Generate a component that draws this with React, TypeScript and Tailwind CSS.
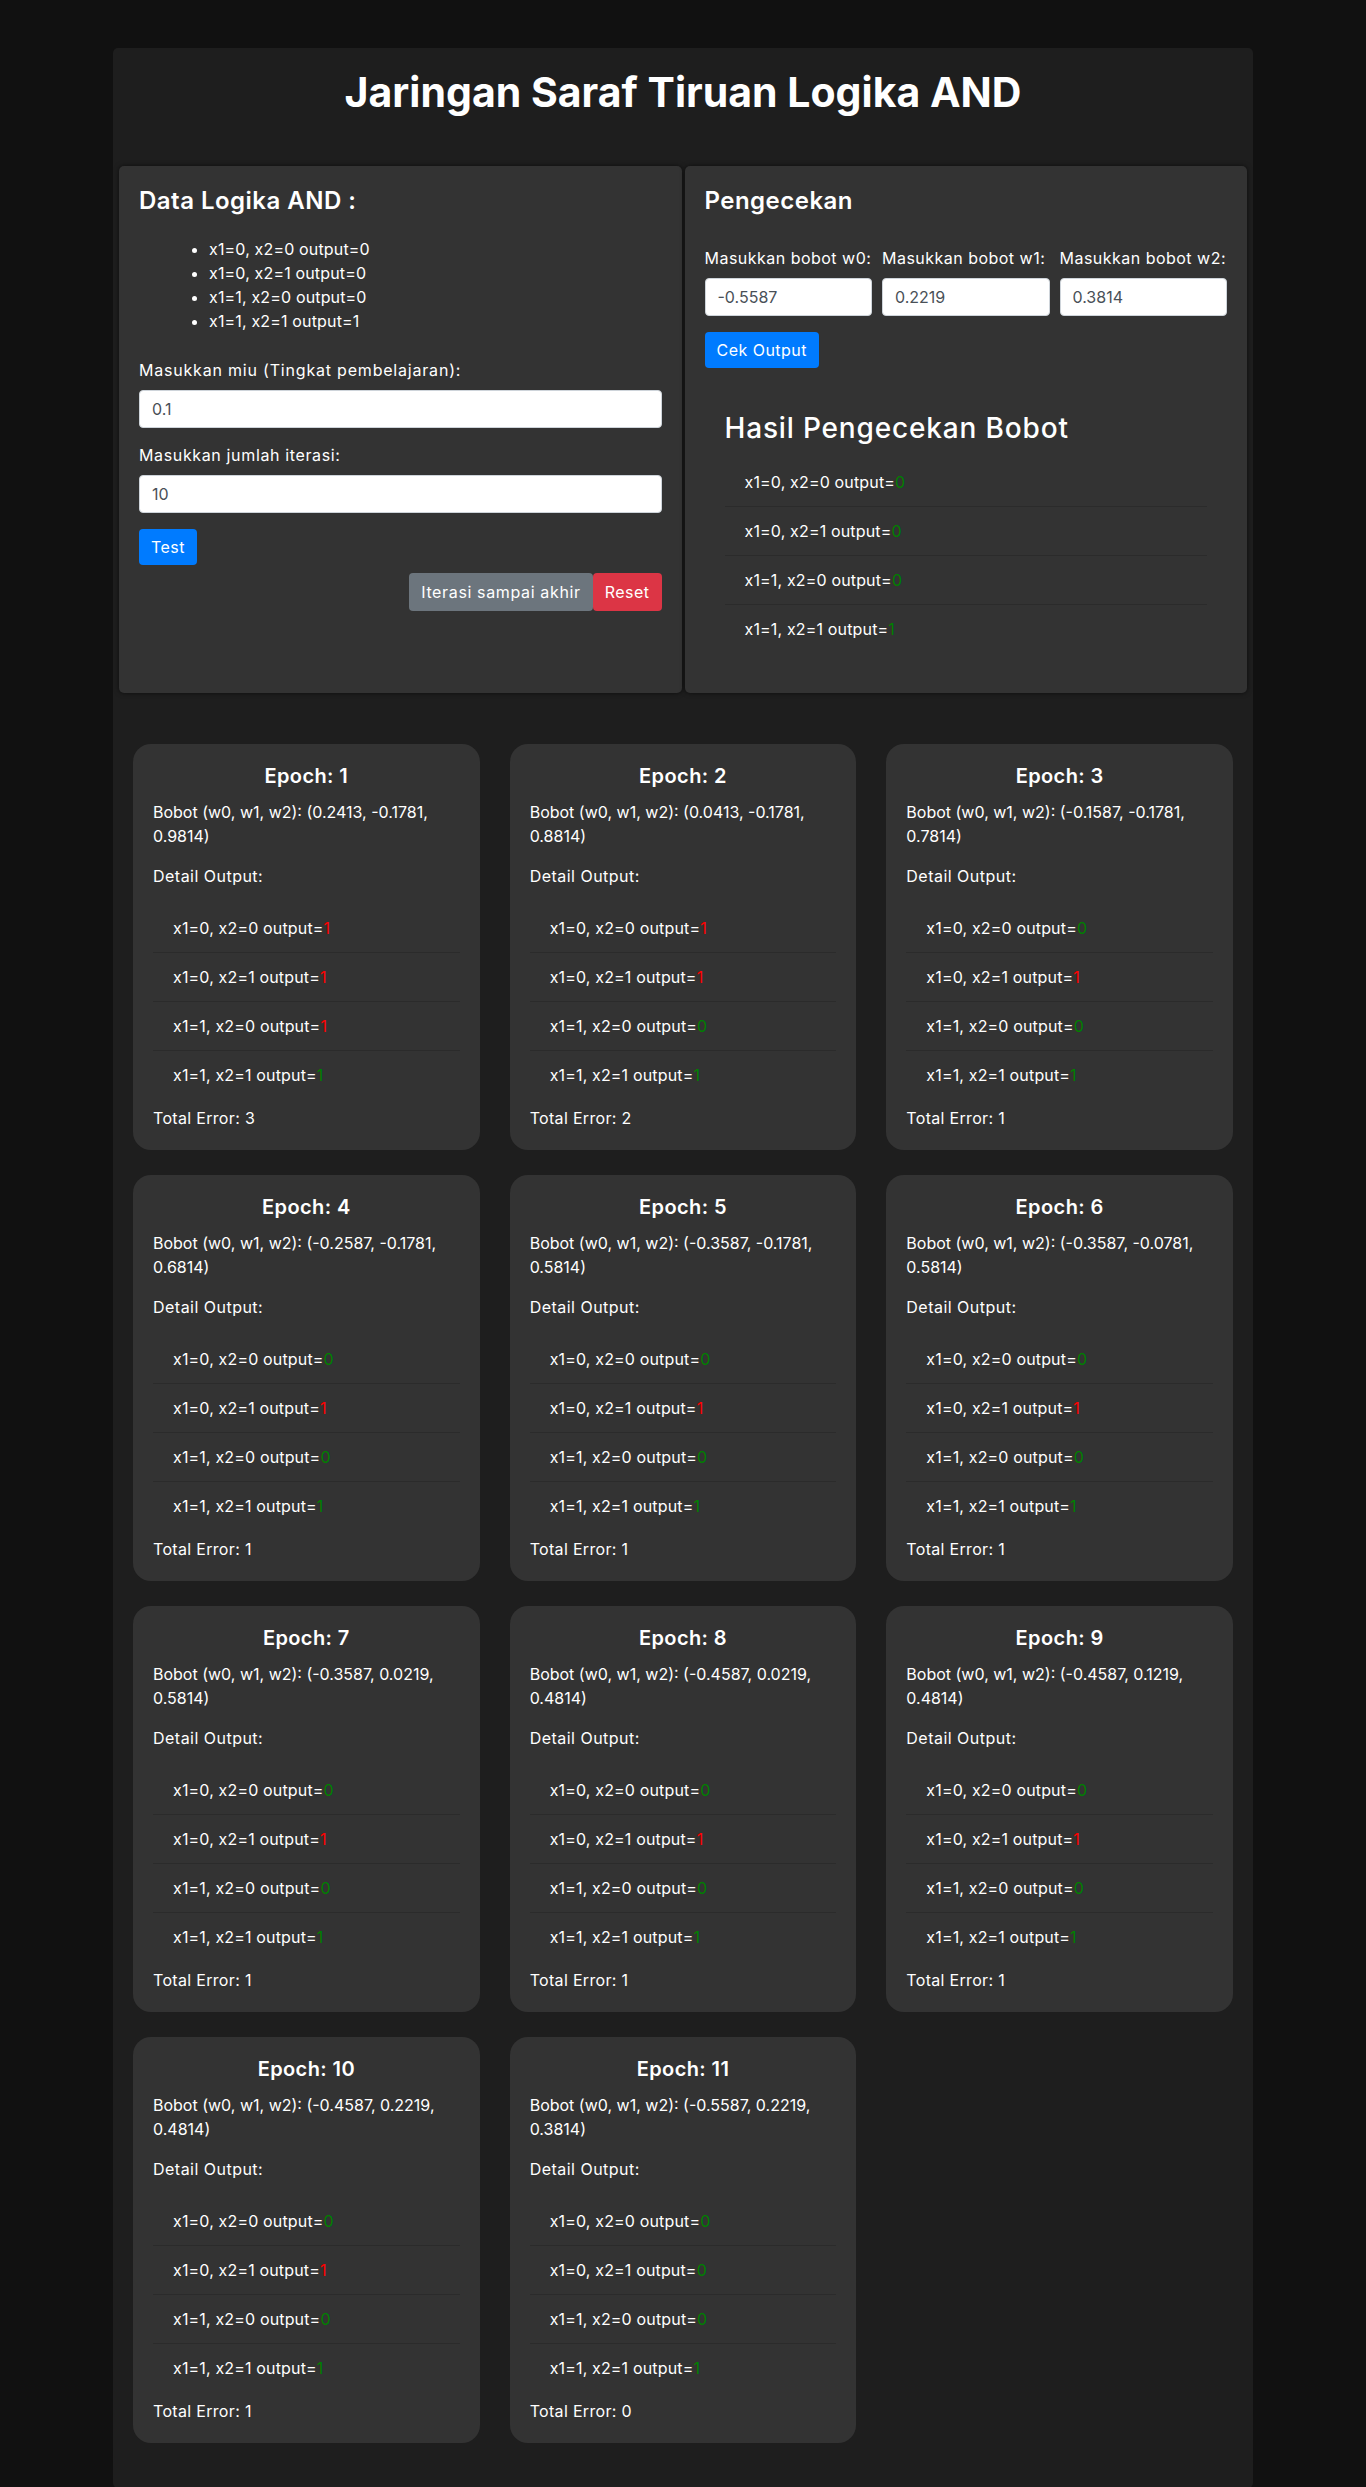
import React from "react";

type Out = { label: string; value: string; ok: boolean };

const labels = ["x1=0, x2=0 output=", "x1=0, x2=1 output=", "x1=1, x2=0 output=", "x1=1, x2=1 output="];

const mk = (vals: string, oks: string): Out[] =>
  labels.map((l, i) => ({ label: l, value: vals[i], ok: oks[i] === "g" }));

const epochs = [
  { n: 1, w: "(0.2413, -0.1781, 0.9814)", out: mk("1111", "rrrg"), err: 3 },
  { n: 2, w: "(0.0413, -0.1781, 0.8814)", out: mk("1101", "rrgg"), err: 2 },
  { n: 3, w: "(-0.1587, -0.1781, 0.7814)", out: mk("0101", "grgg"), err: 1 },
  { n: 4, w: "(-0.2587, -0.1781, 0.6814)", out: mk("0101", "grgg"), err: 1 },
  { n: 5, w: "(-0.3587, -0.1781, 0.5814)", out: mk("0101", "grgg"), err: 1 },
  { n: 6, w: "(-0.3587, -0.0781, 0.5814)", out: mk("0101", "grgg"), err: 1 },
  { n: 7, w: "(-0.3587, 0.0219, 0.5814)", out: mk("0101", "grgg"), err: 1 },
  { n: 8, w: "(-0.4587, 0.0219, 0.4814)", out: mk("0101", "grgg"), err: 1 },
  { n: 9, w: "(-0.4587, 0.1219, 0.4814)", out: mk("0101", "grgg"), err: 1 },
  { n: 10, w: "(-0.4587, 0.2219, 0.4814)", out: mk("0101", "grgg"), err: 1 },
  { n: 11, w: "(-0.5587, 0.2219, 0.3814)", out: mk("0001", "gggg"), err: 0 },
];

function OutList({ items }: { items: Out[] }) {
  return (
    <ul>
      {items.map((o, i) => (
        <li
          key={i}
          className="border-b border-[#2b2b2b] py-3 pl-5 text-[16px] leading-6 tracking-[0.01em] last:border-b-0"
        >
          {o.label}
          <span className={o.ok ? "text-[#008000]" : "text-[#ff0000]"}>{o.value}</span>
        </li>
      ))}
    </ul>
  );
}

const inputCls =
  "block h-[38px] w-full rounded-[4px] border border-[#ced4da] bg-white px-3 text-[16px] text-[#495057] outline-none";

export default function App() {
  return (
    <div className="min-h-screen bg-[#111111] pt-[48px] font-[Inter,sans-serif] text-white">
      <div className="mx-auto w-[1140px] rounded-[5px] bg-[#1e1e1e] px-5 pt-5 pb-5">
        <h1 className="mb-[50px] text-center text-[41px] leading-[48px] font-bold">
          Jaringan Saraf Tiruan Logika AND
        </h1>

        <div className="-mx-[14px] flex gap-[3px]">
          {/* Left panel */}
          <div className="flex-1 rounded-[5px] bg-[#333333] p-5 shadow-[0_0_5px_rgba(0,0,0,0.6)]">
            <h2 className="text-[24px] leading-[29px] font-semibold tracking-[0.02em]">Data Logika AND :</h2>
            <ul className="mt-[22px] list-disc pl-[70px] text-[16px] leading-6 tracking-[0.01em]">
              <li>x1=0, x2=0 output=0</li>
              <li>x1=0, x2=1 output=0</li>
              <li>x1=1, x2=0 output=0</li>
              <li>x1=1, x2=1 output=1</li>
            </ul>
            <label className="mt-[25px] block text-[16px] leading-6 tracking-[0.05em]">
              Masukkan miu (Tingkat pembelajaran):
            </label>
            <input className={inputCls + " mt-2"} defaultValue="0.1" />
            <label className="mt-[15px] block text-[16px] leading-6 tracking-[0.04em]">
              Masukkan jumlah iterasi:
            </label>
            <input className={inputCls + " mt-2"} defaultValue="10" />
            <button className="mt-4 h-[36px] rounded-[4px] bg-[#007bff] px-3 text-[16px] tracking-[0.03em] text-white">
              Test
            </button>
            <div className="mt-2 flex justify-end">
              <button className="h-[38px] rounded-[4px] bg-[#6c757d] px-3 text-[16px] tracking-[0.04em] text-white">
                Iterasi sampai akhir
              </button>
              <button className="h-[38px] rounded-[4px] bg-[#dc3545] px-3 text-[16px] tracking-[0.03em] text-white">
                Reset
              </button>
            </div>
          </div>

          {/* Right panel */}
          <div className="flex-1 rounded-[5px] bg-[#333333] p-5 shadow-[0_0_5px_rgba(0,0,0,0.6)]">
            <h2 className="text-[24px] leading-[29px] font-semibold tracking-[0.02em]">Pengecekan</h2>
            <div className="mt-[31px] grid grid-cols-3 gap-[10px]">
              {[
                ["w0", "-0.5587"],
                ["w1", "0.2219"],
                ["w2", "0.3814"],
              ].map(([w, v]) => (
                <div key={w}>
                  <label className="mb-2 block text-[16px] leading-6 tracking-[0.03em] whitespace-nowrap">
                    Masukkan bobot {w}:
                  </label>
                  <input className={inputCls} defaultValue={v} />
                </div>
              ))}
            </div>
            <button className="mt-4 h-[36px] rounded-[4px] bg-[#007bff] px-3 text-[16px] tracking-[0.03em] text-white">
              Cek Output
            </button>
            <div className="mt-[23px] p-5">
              <h3 className="mb-[13px] text-[28px] leading-[34px] font-medium tracking-[0.03em]">
                Hasil Pengecekan Bobot
              </h3>
              <OutList items={mk("0001", "gggg")} />
            </div>
          </div>
        </div>

        <div className="mt-[51px] grid grid-cols-3 gap-x-[30px]">
          {epochs.map((e) => (
            <div key={e.n} className="mb-[25px] rounded-[18px] bg-[#333333] p-5">
              <h3 className="text-center text-[20px] leading-6 font-semibold tracking-[0.02em]">
                Epoch: {e.n}
              </h3>
              <p className="mt-3 text-[16px] leading-6">Bobot (w0, w1, w2): {e.w}</p>
              <p className="mt-4 text-[16px] leading-6 tracking-[0.03em]">Detail Output:</p>
              <div className="mt-4">
                <OutList items={e.out} />
              </div>
              <p className="mt-[7px] text-[16px] leading-6 tracking-[0.02em]">Total Error: {e.err}</p>
            </div>
          ))}
        </div>
      </div>
    </div>
  );
}
